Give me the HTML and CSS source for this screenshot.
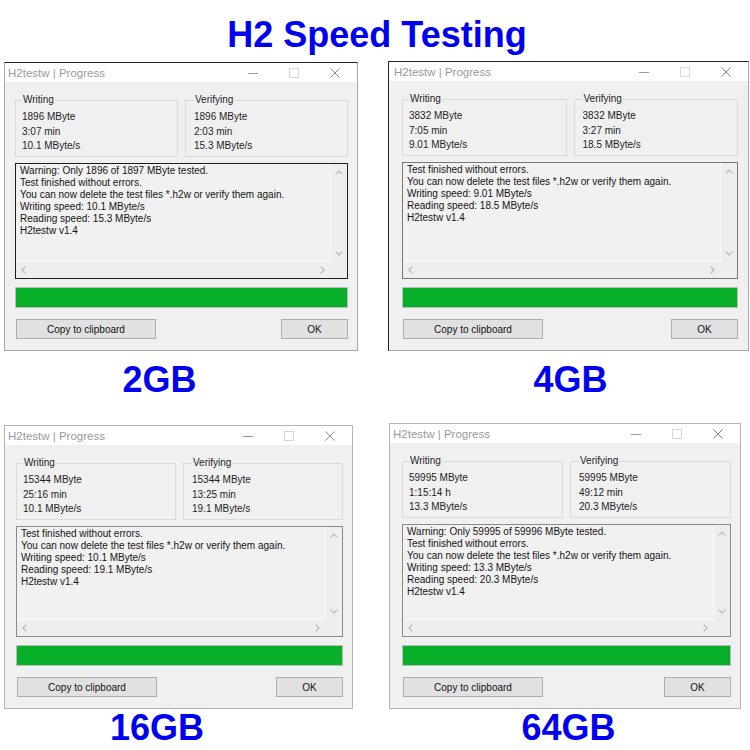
FILE: index.html
```html
<!DOCTYPE html>
<html lang="en">
<head>
<meta charset="utf-8">
<title>H2 Speed Testing</title>
<link rel="stylesheet" href="styles.css">
</head>
<body>
<h1 class="headline">H2 Speed Testing</h1>
<main class="grid">

  <section class="cell cell-2gb">
    <div class="win win-2gb">
      <div class="titlebar">
        <span class="title">H2testw | Progress</span>
        <div class="controls">
          <span class="ctl"><svg width="10" height="10" viewBox="0 0 10 10"><path d="M0 5.5H10" stroke="#9a9a9a"/></svg></span>
          <span class="ctl"><svg width="10" height="10" viewBox="0 0 10 10"><rect x="0.5" y="0.5" width="9" height="9" fill="none" stroke="#d6d6d6"/></svg></span>
          <span class="ctl"><svg width="10" height="10" viewBox="0 0 10 10"><path d="M0.5 0.5L9.5 9.5M9.5 0.5L0.5 9.5" stroke="#8c8c8c"/></svg></span>
        </div>
      </div>
      <div class="win-body">
        <div class="groups">
          <fieldset class="group"><legend>Writing</legend><div>1896 MByte</div><div>3:07 min</div><div>10.1 MByte/s</div></fieldset>
          <fieldset class="group group-right"><legend>Verifying</legend><div>1896 MByte</div><div>2:03 min</div><div>15.3 MByte/s</div></fieldset>
        </div>
        <div class="log">
          <div class="log-text">Warning: Only 1896 of 1897 MByte tested.
Test finished without errors.
You can now delete the test files *.h2w or verify them again.
Writing speed: 10.1 MByte/s
Reading speed: 15.3 MByte/s
H2testw v1.4</div>
          <div class="vbar">
            <svg width="8" height="5" viewBox="0 0 8 5"><path d="M0.7 4.3L4 1L7.3 4.3" fill="none" stroke="#b8b8b8" stroke-width="1.2"/></svg>
            <svg width="8" height="5" viewBox="0 0 8 5"><path d="M0.7 0.7L4 4L7.3 0.7" fill="none" stroke="#b8b8b8" stroke-width="1.2"/></svg>
          </div>
          <div class="hbar">
            <svg width="5" height="8" viewBox="0 0 5 8"><path d="M4.3 0.7L1 4L4.3 7.3" fill="none" stroke="#b8b8b8" stroke-width="1.2"/></svg>
            <svg width="5" height="8" viewBox="0 0 5 8"><path d="M0.7 0.7L4 4L0.7 7.3" fill="none" stroke="#b8b8b8" stroke-width="1.2"/></svg>
          </div>
          <div class="corner"></div>
        </div>
        <div class="progress"></div>
        <div class="buttons">
          <button class="btn btn-copy">Copy to clipboard</button>
          <button class="btn btn-ok">OK</button>
        </div>
      </div>
    </div>
    <div class="caption cap-left">2GB</div>
  </section>

  <section class="cell cell-4gb">
    <div class="win win-4gb">
      <div class="titlebar">
        <span class="title">H2testw | Progress</span>
        <div class="controls">
          <span class="ctl"><svg width="10" height="10" viewBox="0 0 10 10"><path d="M0 5.5H10" stroke="#9a9a9a"/></svg></span>
          <span class="ctl"><svg width="10" height="10" viewBox="0 0 10 10"><rect x="0.5" y="0.5" width="9" height="9" fill="none" stroke="#d6d6d6"/></svg></span>
          <span class="ctl"><svg width="10" height="10" viewBox="0 0 10 10"><path d="M0.5 0.5L9.5 9.5M9.5 0.5L0.5 9.5" stroke="#8c8c8c"/></svg></span>
        </div>
      </div>
      <div class="win-body">
        <div class="groups">
          <fieldset class="group"><legend>Writing</legend><div>3832 MByte</div><div>7:05 min</div><div>9.01 MByte/s</div></fieldset>
          <fieldset class="group group-right"><legend>Verifying</legend><div>3832 MByte</div><div>3:27 min</div><div>18.5 MByte/s</div></fieldset>
        </div>
        <div class="log">
          <div class="log-text">Test finished without errors.
You can now delete the test files *.h2w or verify them again.
Writing speed: 9.01 MByte/s
Reading speed: 18.5 MByte/s
H2testw v1.4</div>
          <div class="vbar">
            <svg width="8" height="5" viewBox="0 0 8 5"><path d="M0.7 4.3L4 1L7.3 4.3" fill="none" stroke="#b8b8b8" stroke-width="1.2"/></svg>
            <svg width="8" height="5" viewBox="0 0 8 5"><path d="M0.7 0.7L4 4L7.3 0.7" fill="none" stroke="#b8b8b8" stroke-width="1.2"/></svg>
          </div>
          <div class="hbar">
            <svg width="5" height="8" viewBox="0 0 5 8"><path d="M4.3 0.7L1 4L4.3 7.3" fill="none" stroke="#b8b8b8" stroke-width="1.2"/></svg>
            <svg width="5" height="8" viewBox="0 0 5 8"><path d="M0.7 0.7L4 4L0.7 7.3" fill="none" stroke="#b8b8b8" stroke-width="1.2"/></svg>
          </div>
          <div class="corner"></div>
        </div>
        <div class="progress"></div>
        <div class="buttons">
          <button class="btn btn-copy">Copy to clipboard</button>
          <button class="btn btn-ok">OK</button>
        </div>
      </div>
    </div>
    <div class="caption cap-right-a">4GB</div>
  </section>

  <section class="cell cell-16gb">
    <div class="win win-16gb">
      <div class="titlebar">
        <span class="title">H2testw | Progress</span>
        <div class="controls">
          <span class="ctl"><svg width="10" height="10" viewBox="0 0 10 10"><path d="M0 5.5H10" stroke="#9a9a9a"/></svg></span>
          <span class="ctl"><svg width="10" height="10" viewBox="0 0 10 10"><rect x="0.5" y="0.5" width="9" height="9" fill="none" stroke="#d6d6d6"/></svg></span>
          <span class="ctl"><svg width="10" height="10" viewBox="0 0 10 10"><path d="M0.5 0.5L9.5 9.5M9.5 0.5L0.5 9.5" stroke="#8c8c8c"/></svg></span>
        </div>
      </div>
      <div class="win-body">
        <div class="groups">
          <fieldset class="group"><legend>Writing</legend><div>15344 MByte</div><div>25:16 min</div><div>10.1 MByte/s</div></fieldset>
          <fieldset class="group group-right"><legend>Verifying</legend><div>15344 MByte</div><div>13:25 min</div><div>19.1 MByte/s</div></fieldset>
        </div>
        <div class="log">
          <div class="log-text">Test finished without errors.
You can now delete the test files *.h2w or verify them again.
Writing speed: 10.1 MByte/s
Reading speed: 19.1 MByte/s
H2testw v1.4</div>
          <div class="vbar">
            <svg width="8" height="5" viewBox="0 0 8 5"><path d="M0.7 4.3L4 1L7.3 4.3" fill="none" stroke="#b8b8b8" stroke-width="1.2"/></svg>
            <svg width="8" height="5" viewBox="0 0 8 5"><path d="M0.7 0.7L4 4L7.3 0.7" fill="none" stroke="#b8b8b8" stroke-width="1.2"/></svg>
          </div>
          <div class="hbar">
            <svg width="5" height="8" viewBox="0 0 5 8"><path d="M4.3 0.7L1 4L4.3 7.3" fill="none" stroke="#b8b8b8" stroke-width="1.2"/></svg>
            <svg width="5" height="8" viewBox="0 0 5 8"><path d="M0.7 0.7L4 4L0.7 7.3" fill="none" stroke="#b8b8b8" stroke-width="1.2"/></svg>
          </div>
          <div class="corner"></div>
        </div>
        <div class="progress"></div>
        <div class="buttons">
          <button class="btn btn-copy">Copy to clipboard</button>
          <button class="btn btn-ok">OK</button>
        </div>
      </div>
    </div>
    <div class="caption cap-left">16GB</div>
  </section>

  <section class="cell cell-64gb">
    <div class="win win-64gb">
      <div class="titlebar">
        <span class="title">H2testw | Progress</span>
        <div class="controls">
          <span class="ctl"><svg width="10" height="10" viewBox="0 0 10 10"><path d="M0 5.5H10" stroke="#9a9a9a"/></svg></span>
          <span class="ctl"><svg width="10" height="10" viewBox="0 0 10 10"><rect x="0.5" y="0.5" width="9" height="9" fill="none" stroke="#d6d6d6"/></svg></span>
          <span class="ctl"><svg width="10" height="10" viewBox="0 0 10 10"><path d="M0.5 0.5L9.5 9.5M9.5 0.5L0.5 9.5" stroke="#8c8c8c"/></svg></span>
        </div>
      </div>
      <div class="win-body">
        <div class="groups">
          <fieldset class="group"><legend>Writing</legend><div>59995 MByte</div><div>1:15:14 h</div><div>13.3 MByte/s</div></fieldset>
          <fieldset class="group group-right"><legend>Verifying</legend><div>59995 MByte</div><div>49:12 min</div><div>20.3 MByte/s</div></fieldset>
        </div>
        <div class="log">
          <div class="log-text">Warning: Only 59995 of 59996 MByte tested.
Test finished without errors.
You can now delete the test files *.h2w or verify them again.
Writing speed: 13.3 MByte/s
Reading speed: 20.3 MByte/s
H2testw v1.4</div>
          <div class="vbar">
            <svg width="8" height="5" viewBox="0 0 8 5"><path d="M0.7 4.3L4 1L7.3 4.3" fill="none" stroke="#b8b8b8" stroke-width="1.2"/></svg>
            <svg width="8" height="5" viewBox="0 0 8 5"><path d="M0.7 0.7L4 4L7.3 0.7" fill="none" stroke="#b8b8b8" stroke-width="1.2"/></svg>
          </div>
          <div class="hbar">
            <svg width="5" height="8" viewBox="0 0 5 8"><path d="M4.3 0.7L1 4L4.3 7.3" fill="none" stroke="#b8b8b8" stroke-width="1.2"/></svg>
            <svg width="5" height="8" viewBox="0 0 5 8"><path d="M0.7 0.7L4 4L0.7 7.3" fill="none" stroke="#b8b8b8" stroke-width="1.2"/></svg>
          </div>
          <div class="corner"></div>
        </div>
        <div class="progress"></div>
        <div class="buttons">
          <button class="btn btn-copy">Copy to clipboard</button>
          <button class="btn btn-ok">OK</button>
        </div>
      </div>
    </div>
    <div class="caption cap-right-b">64GB</div>
  </section>

</main>
</body>
</html>
```
FILE: styles.css
```css
html, body {
  margin: 0;
  background: #ffffff;
}

body {
  font-family: "Liberation Sans", Arial, sans-serif;
  width: 750px;
  height: 750px;
  overflow: hidden;
}

.headline {
  margin: 0;
  padding: 15px 0 6px 4px;
  font: bold 36px/40px "Liberation Sans", Arial, sans-serif;
  color: #0000f0;
  text-align: center;
}

.grid {
  display: grid;
  grid-template-columns: 384px 1fr;
  row-gap: 25px;
  padding-left: 4px;
  align-items: start;
}

.cell {
  display: flex;
  flex-direction: column;
  justify-self: start;
}

.cell-2gb { padding-top: 1px; }
.cell-16gb { padding-top: 2px; }
.cell-64gb { padding-left: 1px; }

/* window */
.win {
  box-sizing: border-box;
  display: flex;
  flex-direction: column;
  background: #f0f0f0;
  border: 1px solid #a8a8a8;
}

.win-2gb { width: 354px; height: 289px; border-top-color: #222; }
.win-4gb { width: 361px; height: 290px; border-top-color: #222; border-left-color: #222; }
.win-16gb { width: 349px; height: 284px; border-color: #b4b4b4; }
.win-64gb { width: 352px; height: 286px; border-color: #b4b4b4; }

.titlebar {
  flex: none;
  height: 19px;
  background: #ffffff;
  display: flex;
  align-items: center;
  justify-content: space-between;
}

.title {
  padding-left: 3px;
  font-size: 11.5px;
  color: #9a9a9a;
  white-space: nowrap;
}

.win-4gb .title { padding-left: 5px; }

.controls {
  display: flex;
  padding-right: 2px;
}

.ctl {
  width: 41px;
  height: 19px;
  display: flex;
  align-items: center;
  justify-content: center;
}

.ctl svg { display: block; }

.win-body {
  flex: 1;
  min-height: 0;
  display: flex;
  flex-direction: column;
  padding: 12px 9px 11px 10px;
}

.win-4gb .win-body { padding-left: 13px; padding-right: 10px; }
.win-16gb .win-body { padding-left: 11px; }
.win-64gb .win-body { padding-left: 12px; }

.groups {
  flex: none;
  display: grid;
  grid-template-columns: 1fr 1fr;
  column-gap: 7px;
}

.group {
  margin: 0;
  min-width: 0;
  padding: 4px 6px 2px;
  border: 1px solid #d9d9d9;
  font-size: 10px;
  line-height: 14.5px;
  color: #1e1e1e;
  white-space: nowrap;
}

.group legend {
  padding: 0 1px;
  font-size: 10px;
  line-height: 12px;
  color: #1e1e1e;
}

.group-right { padding-left: 8px; }

/* log box */
.log {
  flex: 1;
  min-height: 0;
  margin-top: 6px;
  border: 1px solid #1e1e1e;
  display: grid;
  grid-template-columns: 1fr 16px;
  grid-template-rows: 1fr 16px;
  background: #eeeeee;
}

.win-4gb .log { border-color: #777777; }
.win-16gb .log,
.win-64gb .log { border-color: #8a8a8a; }

.log-text {
  padding: 1px 4px;
  font-size: 10px;
  line-height: 12px;
  color: #141414;
  background: #f1f1f1;
  border-right: 1px solid #fafafa;
  border-bottom: 1px solid #fafafa;
  white-space: pre;
  overflow: hidden;
}

.vbar {
  display: flex;
  flex-direction: column;
  justify-content: space-between;
  align-items: center;
  padding: 6px 0 6px;
}

.hbar {
  display: flex;
  justify-content: space-between;
  align-items: center;
  padding: 0 6px 0 5px;
}

.vbar svg, .hbar svg { display: block; }

/* progress */
.progress {
  flex: none;
  box-sizing: border-box;
  height: 21px;
  margin-top: 8px;
  background: #08b02a;
  border: 1px solid #bcbcbc;
}

.buttons {
  flex: none;
  display: flex;
  justify-content: space-between;
  margin-top: 11px;
}

.btn {
  box-sizing: border-box;
  height: 20px;
  padding: 0;
  border: 1px solid #adadad;
  background: #e1e1e1;
  font: 10px "Liberation Sans", Arial, sans-serif;
  color: #111;
}

.btn-copy { width: 140px; margin-left: 1px; }
.btn-ok { width: 67px; }

/* captions */
.caption {
  margin-top: 11px;
  font: bold 36px/36px "Liberation Sans", Arial, sans-serif;
  color: #0000f0;
  text-align: center;
}

.cell-16gb .caption,
.cell-64gb .caption { margin-top: 1px; }

.cap-left { padding-right: 43px; }
.cap-right-a { padding-left: 4px; }
.cap-right-b { padding-left: 7px; }
```
